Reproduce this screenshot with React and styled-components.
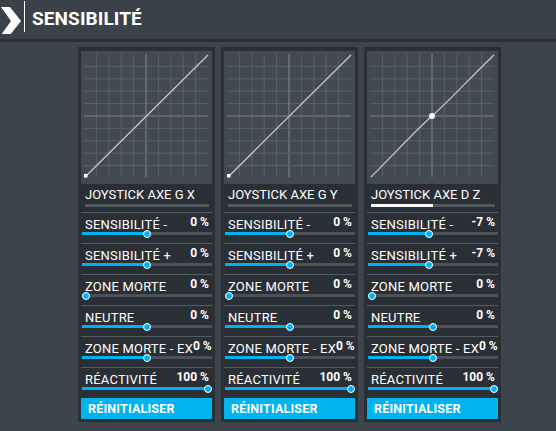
import React from "react";
import styled, { createGlobalStyle } from "styled-components";

const Global = createGlobalStyle`
  html, body { margin: 0; padding: 0; }
  body {
    background: #3e444c;
    font-family: Roboto, "Liberation Sans", sans-serif;
    color: #fff;
    width: 556px;
    height: 431px;
    overflow: hidden;
  }
`;

const Page = styled.div`
  width: 556px;
  height: 431px;
  display: flex;
  flex-direction: column;
  background: #3e444c;
`;

const Header = styled.header`
  height: 39px;
  background: #3b4149;
  border-bottom: 3px solid #2c3036;
  display: flex;
  align-items: center;
  box-sizing: content-box;
`;

const Chevron = styled.svg`
  width: 22px;
  height: 30px;
  margin-top: -1px;
  flex: none;
`;

const Divider = styled.div`
  width: 1px;
  height: 31px;
  background: #fff;
  margin: -6px 7px 0 2px;
`;

const Title = styled.h1`
  margin: 0 0 2px 0;
  font-size: 19px;
  font-weight: 700;
  letter-spacing: 0.1px;
  color: #fff;
`;

const Panels = styled.main`
  display: flex;
  gap: 6px;
  padding: 5px 0 0 78px;
`;

const Panel = styled.section`
  width: 137px;
  box-sizing: border-box;
  background: #2a2e35;
  padding: 4px 3px 3px 3px;
  display: flex;
  flex-direction: column;
`;

const GraphBox = styled.svg`
  display: block;
  width: 131px;
  height: 133px;
  background: #434950;
`;

const AxisName = styled.div`
  margin-top: 4px;
  padding-left: 4px;
  font-size: 13px;
  line-height: 14px;
  white-space: nowrap;
`;

const AxisBar = styled.div`
  margin: 2px 3px 5px 4px;
  height: 3px;
  background: #53585f;
  position: relative;
`;

const AxisFill = styled.div`
  height: 100%;
  background: #ffffff;
`;

const Row = styled.div`
  height: 30px;
  border-top: 1px solid #555b63;
  display: flex;
  flex-direction: column;
`;

const LabelLine = styled.div`
  display: flex;
  justify-content: space-between;
  align-items: flex-start;
  padding: 5px 3px 0 4px;
  height: 14px;
`;

const Label = styled.span`
  font-size: 13px;
  line-height: 14px;
  letter-spacing: 0.2px;
  white-space: nowrap;
`;

const Value = styled.span`
  font-size: 12px;
  line-height: 14px;
  font-weight: 700;
  margin-top: -3px;
  white-space: nowrap;
`;

const Track = styled.div`
  position: relative;
  margin: 0 0 0 1px;
  height: 3px;
  background: #4b5159;
`;

const Fill = styled.div`
  height: 100%;
  background: #00b3f0;
`;

const Thumb = styled.div`
  position: absolute;
  top: 50%;
  width: 8px;
  height: 8px;
  margin: -4px 0 0 -4px;
  box-sizing: border-box;
  border-radius: 50%;
  background: #00b3f0;
  border: 1px solid #ffffff;
`;

const ResetButton = styled.button`
  height: 21px;
  border: none;
  margin: 0;
  background: #00b4f0;
  color: #fff;
  font-family: Roboto, "Liberation Sans", sans-serif;
  font-size: 12.5px;
  font-weight: 700;
  text-align: left;
  padding: 0 0 0 7px;
  letter-spacing: 0.2px;
`;

function Graph({ curved }) {
  const lines = [];
  const step = 12.4;
  for (let i = 1; i < 10; i++) {
    const p = 3 + i * step;
    const center = i === 5;
    lines.push(
      <line key={"v" + i} x1={p} y1={3} x2={p} y2={126} stroke={center ? "#6b7178" : "#596069"} strokeWidth={center ? 1.6 : 1} />
    );
    lines.push(
      <line key={"h" + i} x1={3} y1={p} x2={127} y2={p} stroke={center ? "#6b7178" : "#596069"} strokeWidth={center ? 1.6 : 1} />
    );
  }
  return (
    <GraphBox viewBox="0 0 131 133">
      {lines}
      {curved ? (
        <>
          <path d="M4,126 C30,100 48,80 65,65 C82,50 100,30 127,4" fill="none" stroke="#c3c7cc" strokeWidth="1.3" />
          <circle cx="65" cy="65" r="3" fill="#ffffff" />
        </>
      ) : (
        <>
          <line x1="5" y1="125" x2="127" y2="4" stroke="#c3c7cc" strokeWidth="1.3" />
          <rect x="3" y="123" width="3.5" height="3.5" fill="#ffffff" />
        </>
      )}
    </GraphBox>
  );
}

function Slider({ label, value, pos }) {
  const left = `calc(4px + (100% - 8px) * ${pos})`;
  return (
    <Row>
      <LabelLine>
        <Label>{label}</Label>
        <Value>{value}</Value>
      </LabelLine>
      <Track>
        <Fill style={{ width: left }} />
        <Thumb style={{ left }} />
      </Track>
    </Row>
  );
}

const panels = [
  { name: "JOYSTICK AXE G X", curved: false, axis: 0, sens: "0 %", sp: 0.5 },
  { name: "JOYSTICK AXE G Y", curved: false, axis: 0, sens: "0 %", sp: 0.5 },
  { name: "JOYSTICK AXE D Z", curved: true, axis: 0.5, sens: "-7 %", sp: 0.465 },
];

export default function App() {
  return (
    <Page>
      <Global />
      <Header>
        <Chevron viewBox="0 0 22 30">
          <polygon points="1,3 10,3 21,17 10,31 1,31 11,17" fill="#ffffff" />
        </Chevron>
        <Divider />
        <Title>SENSIBILITÉ</Title>
      </Header>
      <Panels>
        {panels.map((p) => (
          <Panel key={p.name}>
            <Graph curved={p.curved} />
            <AxisName>{p.name}</AxisName>
            <AxisBar>
              <AxisFill style={{ width: `${p.axis * 100}%` }} />
            </AxisBar>
            <Slider label="SENSIBILITÉ -" value={p.sens} pos={p.sp} />
            <Slider label="SENSIBILITÉ +" value={p.sens} pos={p.sp} />
            <Slider label="ZONE MORTE" value="0 %" pos={0} />
            <Slider label="NEUTRE" value="0 %" pos={0.5} />
            <Slider label="ZONE MORTE - EX" value="0 %" pos={0.5} />
            <Slider label="RÉACTIVITÉ" value="100 %" pos={1} />
            <ResetButton>RÉINITIALISER</ResetButton>
          </Panel>
        ))}
      </Panels>
    </Page>
  );
}
